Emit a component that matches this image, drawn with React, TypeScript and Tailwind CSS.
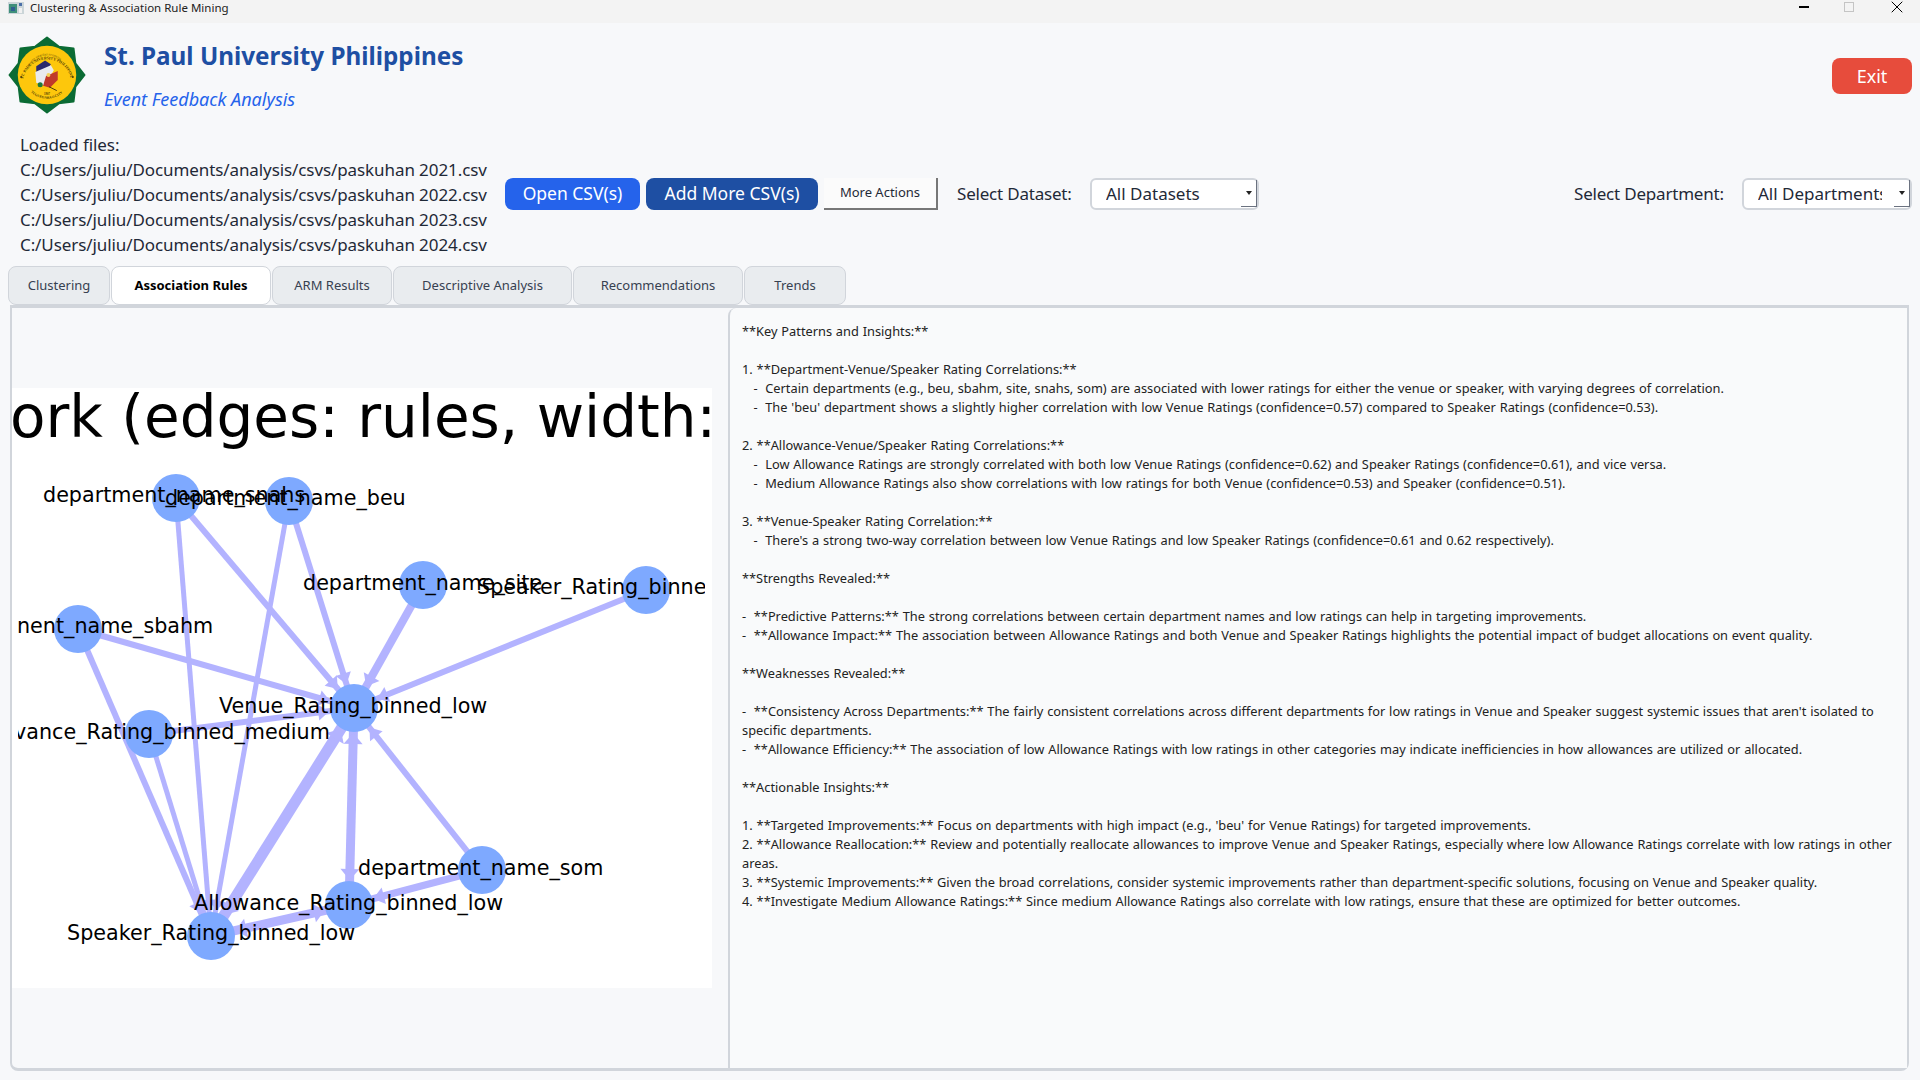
import { X } from "lucide-react";

const insights = `**Key Patterns and Insights:**

1. **Department-Venue/Speaker Rating Correlations:**
   -  Certain departments (e.g., beu, sbahm, site, snahs, som) are associated with lower ratings for either the venue or speaker, with varying degrees of correlation.
   -  The 'beu' department shows a slightly higher correlation with low Venue Ratings (confidence=0.57) compared to Speaker Ratings (confidence=0.53).

2. **Allowance-Venue/Speaker Rating Correlations:**
   -  Low Allowance Ratings are strongly correlated with both low Venue Ratings (confidence=0.62) and Speaker Ratings (confidence=0.61), and vice versa.
   -  Medium Allowance Ratings also show correlations with low ratings for both Venue (confidence=0.53) and Speaker (confidence=0.51).

3. **Venue-Speaker Rating Correlation:**
   -  There's a strong two-way correlation between low Venue Ratings and low Speaker Ratings (confidence=0.61 and 0.62 respectively).

**Strengths Revealed:**

-  **Predictive Patterns:** The strong correlations between certain department names and low ratings can help in targeting improvements.
-  **Allowance Impact:** The association between Allowance Ratings and both Venue and Speaker Ratings highlights the potential impact of budget allocations on event quality.

**Weaknesses Revealed:**

-  **Consistency Across Departments:** The fairly consistent correlations across different departments for low ratings in Venue and Speaker suggest systemic issues that aren't isolated to
specific departments.
-  **Allowance Efficiency:** The association of low Allowance Ratings with low ratings in other categories may indicate inefficiencies in how allowances are utilized or allocated.

**Actionable Insights:**

1. **Targeted Improvements:** Focus on departments with high impact (e.g., 'beu' for Venue Ratings) for targeted improvements.
2. **Allowance Reallocation:** Review and potentially reallocate allowances to improve Venue and Speaker Ratings, especially where low Allowance Ratings correlate with low ratings in other
areas.
3. **Systemic Improvements:** Given the broad correlations, consider systemic improvements rather than department-specific solutions, focusing on Venue and Speaker quality.
4. **Investigate Medium Allowance Ratings:** Since medium Allowance Ratings also correlate with low ratings, ensure that these are optimized for better outcomes.`;

const files = [
  "C:/Users/juliu/Documents/analysis/csvs/paskuhan 2021.csv",
  "C:/Users/juliu/Documents/analysis/csvs/paskuhan 2022.csv",
  "C:/Users/juliu/Documents/analysis/csvs/paskuhan 2023.csv",
  "C:/Users/juliu/Documents/analysis/csvs/paskuhan 2024.csv",
];

const tabs = [
  { label: "Clustering", width: "w-[102px]" },
  { label: "Association Rules", width: "w-[160px]", active: true },
  { label: "ARM Results", width: "w-[120px]" },
  { label: "Descriptive Analysis", width: "w-[179px]" },
  { label: "Recommendations", width: "w-[170px]" },
  { label: "Trends", width: "w-[102px]" },
];

type Pt = [number, number];

const nodes: Record<string, Pt> = {
  snahs: [176, 497],
  beu: [289, 500],
  site: [423, 584],
  binne: [646, 589],
  sbahm: [78, 628],
  venue: [354, 707],
  medium: [149, 733],
  som: [482, 869],
  allow: [349, 904],
  speaker: [211, 935],
};

// from, to, stroke width, arrow at both ends
const edges: [string, string, number, boolean?][] = [
  ["snahs", "venue", 6],
  ["beu", "venue", 6],
  ["site", "venue", 8],
  ["binne", "venue", 6],
  ["sbahm", "venue", 6],
  ["medium", "venue", 6],
  ["som", "venue", 6],
  ["allow", "venue", 9, true],
  ["speaker", "venue", 11, true],
  ["sbahm", "speaker", 6],
  ["medium", "speaker", 5],
  ["snahs", "speaker", 5],
  ["beu", "speaker", 5],
  ["allow", "speaker", 9, true],
  ["som", "allow", 7],
];

const labels: [string, number, number][] = [
  ["department_name_snahs", 43, 494],
  ["department_name_beu", 165, 497],
  ["department_name_site", 303, 582],
  ["Speaker_Rating_binne", 477, 586],
  ["nent_name_sbahm", 17, 625],
  ["Venue_Rating_binned_low", 219, 705],
  ["vance_Rating_binned_medium", 14, 731],
  ["department_name_som", 358, 867],
  ["Allowance_Rating_binned_low", 194, 902],
  ["Speaker_Rating_binned_low", 67, 932],
];

function arrowHead(from: Pt, to: Pt, width: number) {
  const dx = to[0] - from[0];
  const dy = to[1] - from[1];
  const len = Math.hypot(dx, dy);
  const ux = dx / len;
  const uy = dy / len;
  const tipX = to[0] - ux * 25;
  const tipY = to[1] - uy * 25;
  const baseX = tipX - ux * 11;
  const baseY = tipY - uy * 11;
  const half = 5 + width / 2;
  return `${tipX},${tipY} ${baseX - uy * half},${baseY + ux * half} ${baseX + uy * half},${baseY - ux * half}`;
}

function Graph() {
  return (
    <svg viewBox="12 387 700 600" className="h-[600px] w-[700px] shrink-0 bg-white">
      <defs>
        <clipPath id="axes">
          <rect x="18" y="387" width="687" height="600" />
        </clipPath>
      </defs>
      <text x="10" y="436" fontFamily="DejaVu Sans" fontSize="58" fill="#000">
        ork (edges: rules, width:
      </text>
      {edges.map(([a, b, w, both]) => (
        <g key={a + b} fill="#b3b3ff">
          <line x1={nodes[a][0]} y1={nodes[a][1]} x2={nodes[b][0]} y2={nodes[b][1]} stroke="#b3b3ff" strokeWidth={w} />
          <polygon points={arrowHead(nodes[a], nodes[b], w)} />
          {both && <polygon points={arrowHead(nodes[b], nodes[a], w)} />}
        </g>
      ))}
      {Object.entries(nodes).map(([k, [x, y]]) => (
        <circle key={k} cx={x} cy={y} r="24" fill="#7ea9ff" />
      ))}
      <g clipPath="url(#axes)">
        {labels.map(([t, x, y]) => (
          <text key={t} x={x} y={y + 7} fontFamily="DejaVu Sans" fontSize="20.7" fill="#000">
            {t}
          </text>
        ))}
      </g>
    </svg>
  );
}

function Logo() {
  const star: string[] = [];
  for (let i = 0; i < 16; i++) {
    const r = i % 2 === 0 ? 38.5 : 31.5;
    const a = (i * Math.PI) / 8 - Math.PI / 2;
    star.push(`${40 + r * Math.cos(a)},${40 + r * Math.sin(a)}`);
  }
  return (
    <svg viewBox="0 0 80 80" className="h-[78px] w-[78px] shrink-0">
      <polygon points={star.join(" ")} fill="#0b6b34" stroke="#0b6b34" strokeWidth="2" strokeLinejoin="round" />
      <circle cx="40" cy="40" r="30" fill="#fdc70c" />
      <defs>
        <path id="logoArc" d="M15.5 44a25 25 0 0 1 49 0" />
        <path id="logoArcMid" d="M20 40a20 20 0 0 1 40 0" />
        <path id="logoArcLow" d="M21 55a24 24 0 0 0 38 0" />
      </defs>
      <text fontFamily="Liberation Serif" fontSize="4" fontWeight="700" fill="#4a3b08">
        <textPath href="#logoArc">ST. PAUL UNIVERSITY PHILIPPINES</textPath>
      </text>
      <text fontFamily="Liberation Serif" fontSize="3" fill="#4a3b08">
        <textPath href="#logoArcMid" startOffset="10%">CARITAS VERITAS SCIENTIA</textPath>
      </text>
      <text fontFamily="Liberation Serif" fontSize="3.6" fontWeight="700" fill="#4a3b08">
        <textPath href="#logoArcLow" startOffset="8%">TUGUEGARAO CITY</textPath>
      </text>
      <text x="40" y="61" textAnchor="middle" fontFamily="Liberation Serif" fontSize="3" fontWeight="700" fill="#4a3b08">
        1907
      </text>
      <circle cx="13.5" cy="42" r="1" fill="#4a3b08" />
      <circle cx="66.5" cy="42" r="1" fill="#4a3b08" />
      <path d="M29 31l9-6 6 4-4 6-11 3z" fill="#2b2a6d" />
      <path d="M28 37l16-7 3 5-9 16-9-3z" fill="#e9ebf0" />
      <path d="M39 41l12-5 0 9-8 8-7-2z" fill="#c0392b" />
      <circle cx="41.5" cy="40" r="2" fill="#f4d35e" />
      <circle cx="33" cy="50" r="2.6" fill="#1f7a3a" />
      <path d="M42 52l8 4" stroke="#4a3b08" strokeWidth="1" />
    </svg>
  );
}

function Combo({ text, className, textWidth }: { text: string; className: string; textWidth: string }) {
  return (
    <div className={`flex h-8 items-center rounded-md border-2 border-[#d1d5db] bg-white ${className}`}>
      <span className={`overflow-hidden whitespace-nowrap text-[17px] ${textWidth}`}>{text}</span>
      <span className="ml-auto flex h-[27px] w-[16px] items-center justify-center self-start border-r border-b border-[#6b7280]">
        <span className="h-0 w-0 border-x-[3.5px] border-t-[4px] border-x-transparent border-t-[#222]" />
      </span>
    </div>
  );
}

export default function App() {
  return (
    <div className="flex h-[1080px] w-[1920px] flex-col overflow-hidden bg-[#f7f8fa] font-['Noto_Sans',sans-serif] text-[#1f2937]">
      <div className="flex h-[23px] shrink-0 items-start bg-[#f3f3f3] pl-2 text-[11.5px] leading-[16px] text-[#222]">
        <svg viewBox="0 0 16 12" className="mt-[2px] mr-[6px] h-3 w-4">
          <rect width="16" height="12" fill="#cbd5d8" />
          <rect x="1" y="2" width="8" height="9" fill="#3f8f7a" />
          <rect x="3" y="5" width="4" height="4" fill="#2f5f8f" />
          <rect x="11" y="1" width="3" height="3" fill="#4b6fa8" />
          <rect x="11" y="6" width="3" height="5" fill="#f1f1f1" />
        </svg>
        Clustering &amp; Association Rule Mining
        <div className="ml-auto flex h-[14px] items-center">
          <span className="mr-[35px] h-[1.5px] w-[10px] bg-black" />
          <span className="mr-[33px] h-[10px] w-[10px] border border-[#c4c4c4]" />
          <X size={20} strokeWidth={1.2} className="mr-[13px] text-black" />
        </div>
      </div>

      <div className="flex h-[108px] shrink-0 pr-2 pl-2">
        <div className="mt-[13px]">
          <Logo />
        </div>
        <div className="ml-[18px] flex flex-col">
          <h1 className="mt-[17px] text-[24.25px] leading-8 font-bold text-[#1e4fa3]">St. Paul University Philippines</h1>
          <p className="mt-[15px] text-[18px] leading-6 text-[#2563eb] italic">Event Feedback Analysis</p>
        </div>
        <button className="mt-[35px] ml-auto h-9 w-20 rounded-lg bg-[#e74c3c] text-[18px] text-white">Exit</button>
      </div>

      <div className="flex h-[125px] shrink-0 items-center pr-2 pl-5 text-[17px]">
        <div className="w-[485px] shrink-0 pt-[2px] leading-[25px] tracking-[-0.09px] whitespace-nowrap">
          <div>Loaded files:</div>
          {files.map((f) => (
            <div key={f}>{f}</div>
          ))}
        </div>
        <button className="h-8 w-[135px] rounded-lg bg-[#2563eb] text-[17.5px] text-white">Open CSV(s)</button>
        <button className="ml-[6px] h-8 w-[172px] rounded-lg bg-[#1e4fa3] text-[17.5px] text-white">Add More CSV(s)</button>
        <button className="ml-[6px] h-8 w-[114px] border-r-2 border-b-2 border-[#777] bg-[#fbfbfb] text-[13px]">More Actions</button>
        <span className="ml-[19px] w-[133px] tracking-[-0.2px] whitespace-nowrap">Select Dataset:</span>
        <Combo text="All Datasets" className="w-[169px] pl-[14px]" textWidth="w-[120px]" />
        <span className="ml-auto w-[168px] tracking-[-0.2px] whitespace-nowrap">Select Department:</span>
        <Combo text="All Departments" className="w-[170px] pl-[14px]" textWidth="w-[124px]" />
      </div>

      <div className="mt-[10px] flex h-[39px] shrink-0 gap-[1px] pl-2">
        {tabs.map((t) => (
          <div
            key={t.label}
            className={`flex items-center justify-center rounded-lg border border-[#d1d5db] text-[13px] ${t.width} ${
              t.active ? "bg-white font-bold text-black" : "bg-[#e9ecef] text-[#374151]"
            }`}
          >
            {t.label}
          </div>
        ))}
      </div>

      <div className="ml-[10px] flex h-[766px] w-[1899px] shrink-0 rounded-b-lg border-x-2 border-t-[3px] border-b-[3px] border-[#d1d5db]">
        <div className="flex w-[716px] shrink-0 items-center">
          <Graph />
        </div>
        <div className="flex-1 rounded-tl-lg border-l-2 border-[#d1d5db] bg-[#f9fafb] pt-[14px] pl-[12px] text-[12.8px] leading-[19px] [word-spacing:0.5px] whitespace-pre text-[#222]">
          {insights}
        </div>
      </div>
    </div>
  );
}
